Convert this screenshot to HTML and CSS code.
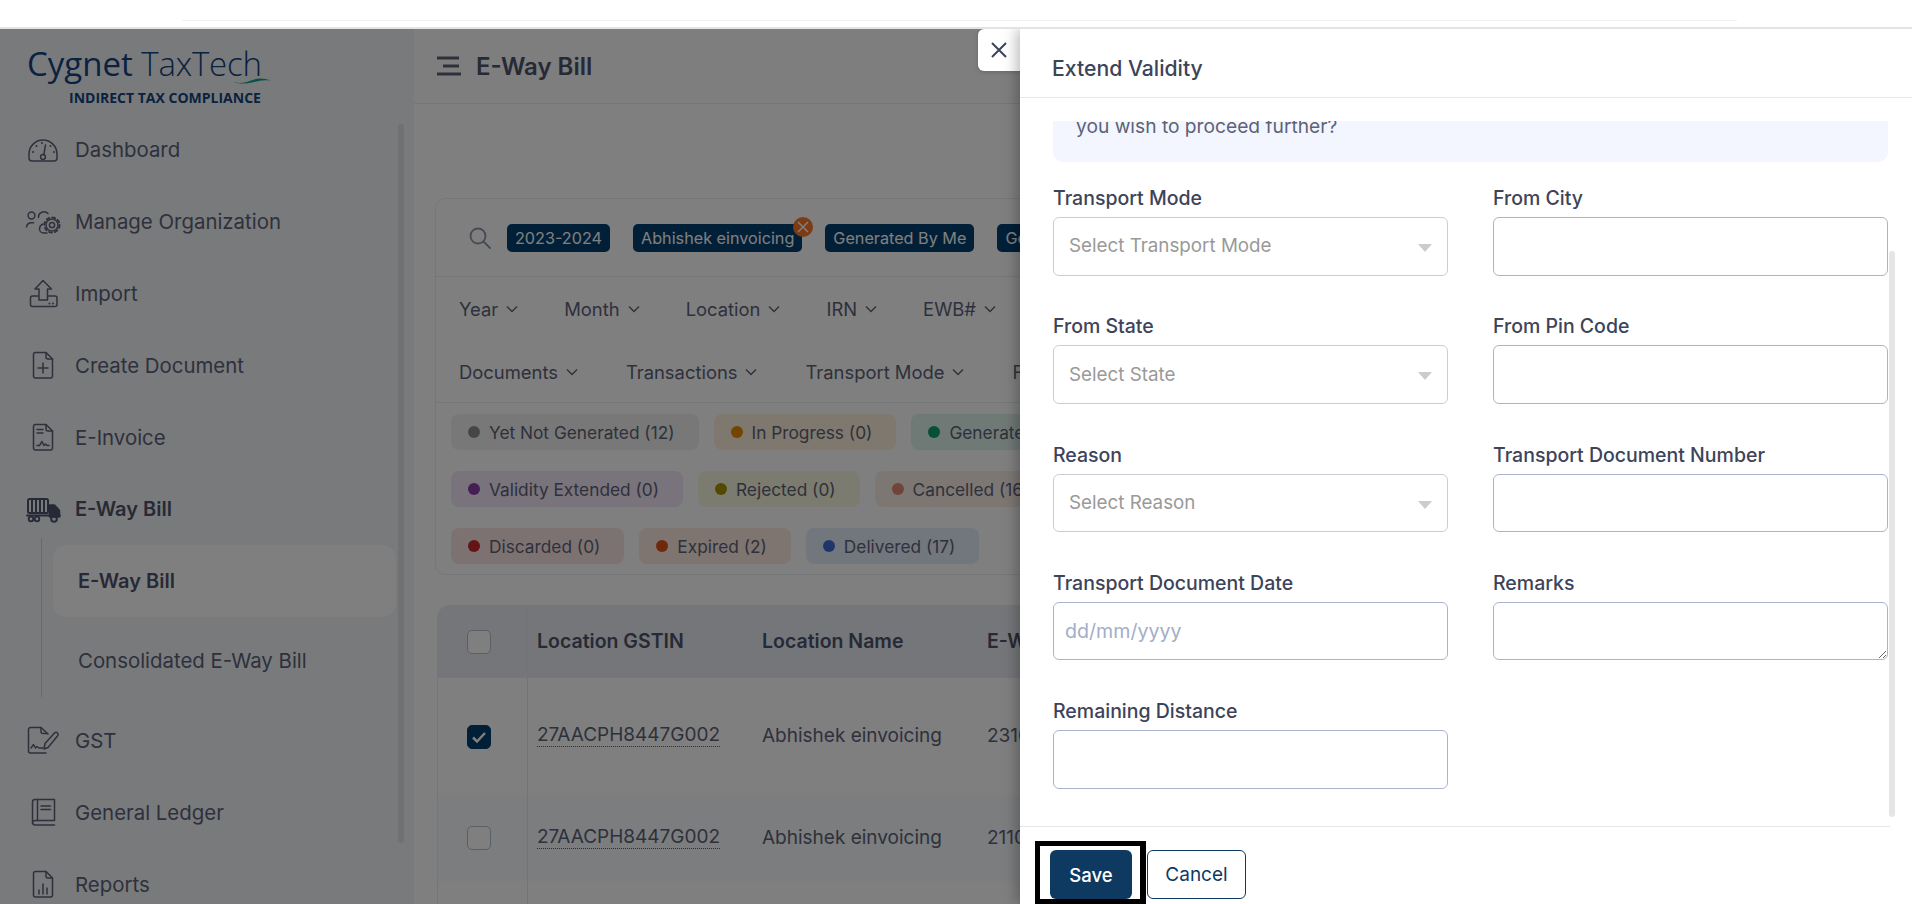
FILE: index.html
```html
<!DOCTYPE html>
<html lang="en">
<head>
<meta charset="utf-8">
<title>E-Way Bill</title>
<link rel="stylesheet" href="styles.css">
</head>
<body>
<div class="topbar"><div class="topline"></div></div>
<div class="app">
  <aside class="sidebar">
    <div class="logo">
      <div class="logo-name"><span class="logo-a">Cygnet</span> <span class="logo-b">TaxTech</span></div>
      <svg class="logo-wave" width="40" height="7" viewBox="0 0 40 7"><path d="M0 4.5C8 7 14 6 20 3.5S32 .5 40 3.6C32 2.4 27 4 21 5.5S7 7 0 4.5Z" fill="#12a388"/></svg>
      <div class="logo-sub">INDIRECT TAX COMPLIANCE</div>
    </div>
    <nav class="nav">
      <a class="nav-item"><svg class="ico" viewBox="0 0 36 36"><path d="M7 29H29a3 3 0 0 0 3-3v-4a14 14 0 0 0-28 0v4a3 3 0 0 0 3 3Z"/><circle cx="18" cy="25" r="2.4"/><path d="M18.8 22.6 20.5 13"/><path class="dots" d="M8 20h.01M11.5 14h.01M17 11h.01M25.5 14h.01M29 20h.01"/></svg><span>Dashboard</span></a>
      <a class="nav-item"><svg class="ico" viewBox="0 0 36 36"><circle cx="6.5" cy="11.5" r="3.4"/><path d="M1.5 23a5 5 0 0 1 5-4.300h2"/><path d="M13.500 13.500a5.500 5.500 0 0 1 9.500-4"/><path d="M22 29h-3.500a4 4 0 0 1-4-4 5.500 5.500 0 0 1 3.500-5"/><circle cx="27" cy="21" r="6"/><circle cx="27" cy="21" r="7.600" stroke-width="1.800" stroke-dasharray="3 2.970"/><circle cx="27" cy="21" r="2.600"/></svg><span>Manage Organization</span></a>
      <a class="nav-item"><svg class="ico" viewBox="0 0 36 36"><path d="M18 4.500 26.500 13H22.500V24H14V13H10Z"/><path d="M13 20H7.500a2 2 0 0 0-2 2v6.500a2 2 0 0 0 2 2H30a2 2 0 0 0 2-2V22a2 2 0 0 0-2-2H23"/><path class="dots" d="M24.500 27.500h.01M28 27.500h.01"/></svg><span>Import</span></a>
      <a class="nav-item"><svg class="ico" viewBox="0 0 36 36"><path d="M10.500 4.500H21L27.500 11V28a2 2 0 0 1-2 2H10.500a2 2 0 0 1-2-2V6.500a2 2 0 0 1 2-2Z"/><path d="M21 4.500V9a2 2 0 0 0 2 2h4.500"/><path d="M18 15V25M13 20H23"/></svg><span>Create Document</span></a>
      <a class="nav-item"><svg class="ico" viewBox="0 0 36 36"><path d="M10.500 4.500H21L27.500 11V28a2 2 0 0 1-2 2H10.500a2 2 0 0 1-2-2V6.500a2 2 0 0 1 2-2Z"/><path d="M21 4.500V9a2 2 0 0 0 2 2h4.500"/><path d="M12 9.500H18M12 13H18"/><path d="M12 25.500h2.500l2.500-4 2 4 1.500-1.500 1.500 1.500H24"/></svg><span>E-Invoice</span></a>
      <a class="nav-item is-open"><svg class="ico ico-solid" viewBox="0 0 36 36"><rect x="3" y="7" width="20" height="14" rx="1.500" stroke-width="2"/><path d="M7 8V20M11 8V20M15 8V20M19 8V20" stroke-width="2"/><path d="M2 23.500H35" stroke-width="2"/><path class="fill" d="M24.500 13H29.500L34.500 18.500V25H24.500Z"/><circle cx="6" cy="27" r="2.300" stroke-width="1.800"/><circle cx="12" cy="27" r="2.300" stroke-width="1.800"/><circle cx="29" cy="27" r="2.800" stroke-width="2"/></svg><span>E-Way Bill</span></a>
      <div class="subnav">
        <a class="sub-item is-current">E-Way Bill</a>
        <a class="sub-item">Consolidated E-Way Bill</a>
      </div>
      <a class="nav-item"><svg class="ico" viewBox="0 0 36 36"><path d="M21 30H5.500a2 2 0 0 1-2-2V6.500a2 2 0 0 1 2-2H16l7 6.500"/><path d="M16 4.500V8.500a2 2 0 0 0 2 2h4"/><path d="M6 25l2.500-3.500 2 3.500 1.500-1.500 2 1.500h4"/><path d="M19 26l1-5.500L29.500 10a2.100 2.100 0 0 1 3 3L23 24.500Z"/></svg><span>GST</span></a>
      <a class="nav-item"><svg class="ico" viewBox="0 0 36 36"><path d="M10 4.500H29.500V25.500H10a2.500 2.500 0 0 0-2.500 2.500V7A2.500 2.500 0 0 1 10 4.500Z"/><path d="M12.500 4.500V25.500M7.500 28A2.500 2.500 0 0 0 10 30H29.500"/><path d="M16 11H25.500M16 14.500H25.500"/></svg><span>General Ledger</span></a>
      <a class="nav-item"><svg class="ico" viewBox="0 0 36 36"><path d="M10.500 4.500H21L27.500 11V28a2 2 0 0 1-2 2H10.500a2 2 0 0 1-2-2V6.500a2 2 0 0 1 2-2Z"/><path d="M21 4.500V9a2 2 0 0 0 2 2h4.500"/><path d="M14 27V23M18 27V17M22 27V21"/></svg><span>Reports</span></a>
    </nav>
    <div class="side-scroll"></div>
  </aside>

  <main class="main">
    <header class="main-head">
      <svg class="burger" width="24" height="20" viewBox="0 0 24 20"><path d="M0 2H22M6 10H22M0 18H24" fill="none" stroke="#5d6278" stroke-width="3"/></svg>
      <h1 class="main-title">E-Way Bill</h1>
    </header>
    <section class="card">
      <div class="search-row">
        <svg class="search-ico" width="22" height="22" viewBox="0 0 22 22"><circle cx="9" cy="9" r="7.500"/><path d="M14.500 14.500 21 21"/></svg>
        <span class="chip">2023-2024</span>
        <span class="chip chip-x">Abhishek einvoicing<i class="chip-close"><svg width="14" height="14" viewBox="0 0 14 14"><path d="M2 2 12 12M12 2 2 12"/></svg></i></span>
        <span class="chip">Generated By Me</span>
        <span class="chip">Generated</span>
      </div>
      <div class="filters">
        <div class="filter-row">
          <span class="filter">Year<svg viewBox="0 0 12 8"><path d="M1 1.500 6 6.500 11 1.500"/></svg></span>
          <span class="filter">Month<svg viewBox="0 0 12 8"><path d="M1 1.500 6 6.500 11 1.500"/></svg></span>
          <span class="filter">Location<svg viewBox="0 0 12 8"><path d="M1 1.500 6 6.500 11 1.500"/></svg></span>
          <span class="filter">IRN<svg viewBox="0 0 12 8"><path d="M1 1.500 6 6.500 11 1.500"/></svg></span>
          <span class="filter">EWB#<svg viewBox="0 0 12 8"><path d="M1 1.500 6 6.500 11 1.500"/></svg></span>
        </div>
        <div class="filter-row">
          <span class="filter">Documents<svg viewBox="0 0 12 8"><path d="M1 1.500 6 6.500 11 1.500"/></svg></span>
          <span class="filter">Transactions<svg viewBox="0 0 12 8"><path d="M1 1.500 6 6.500 11 1.500"/></svg></span>
          <span class="filter">Transport Mode<svg viewBox="0 0 12 8"><path d="M1 1.500 6 6.500 11 1.500"/></svg></span>
          <span class="filter">From</span>
        </div>
      </div>
      <div class="statuses">
        <div class="status-row">
          <span class="pill s-grey"><b></b>Yet Not Generated (12)</span>
          <span class="pill s-amber"><b></b>In Progress (0)</span>
          <span class="pill s-green"><b></b>Generated (3)</span>
        </div>
        <div class="status-row">
          <span class="pill s-purple"><b></b>Validity Extended (0)</span>
          <span class="pill s-olive"><b></b>Rejected (0)</span>
          <span class="pill s-salmon"><b></b>Cancelled (16)</span>
        </div>
        <div class="status-row">
          <span class="pill s-red"><b></b>Discarded (0)</span>
          <span class="pill s-orange"><b></b>Expired (2)</span>
          <span class="pill s-blue"><b></b>Delivered (17)</span>
        </div>
      </div>
    </section>
    <section class="table">
      <div class="tr th">
        <div class="td td-check"><span class="box"></span></div>
        <div class="td">Location GSTIN</div>
        <div class="td">Location Name</div>
        <div class="td">E-Way Bill No.</div>
      </div>
      <div class="tr row-tall">
        <div class="td td-check"><span class="box box-on"><svg width="16" height="14" viewBox="0 0 16 14"><path d="M2 7.500 6 11.500 14 3"/></svg></span></div>
        <div class="td"><span class="link">27AACPH8447G002</span></div>
        <div class="td">Abhishek einvoicing</div>
        <div class="td">231012345678</div>
      </div>
      <div class="tr row-alt">
        <div class="td td-check"><span class="box"></span></div>
        <div class="td"><span class="link">27AACPH8447G002</span></div>
        <div class="td">Abhishek einvoicing</div>
        <div class="td">211012345678</div>
      </div>
      <div class="tr row-tall"><div class="td td-check"></div></div>
    </section>
  </main>

  <div class="overlay"></div>

  <button class="panel-close" type="button" aria-label="Close"><svg width="18" height="18" viewBox="0 0 18 18"><path d="M2 2 16 16M16 2 2 16"/></svg></button>

  <aside class="panel">
    <div class="panel-head">Extend Validity</div>
    <div class="panel-body">
      <div class="info">you wish to proceed further?</div>
      <form class="form-grid">
        <div class="field"><label>Transport Mode</label><div class="select">Select Transport Mode<i></i></div></div>
        <div class="field"><label>From City</label><input class="input" type="text"></div>
        <div class="field"><label>From State</label><div class="select">Select State<i></i></div></div>
        <div class="field"><label>From Pin Code</label><input class="input" type="text"></div>
        <div class="field"><label>Reason</label><div class="select">Select Reason<i></i></div></div>
        <div class="field"><label>Transport Document Number</label><input class="input" type="text"></div>
        <div class="field"><label>Transport Document Date</label><input class="input input-date" type="text" placeholder="dd/mm/yyyy"></div>
        <div class="field"><label>Remarks</label><textarea class="input"></textarea></div>
        <div class="field"><label>Remaining Distance</label><input class="input" type="text"></div>
      </form>
    </div>
    <div class="panel-foot">
      <span class="save-wrap"><button class="btn btn-save" type="button">Save</button><span class="highlight"></span></span>
      <button class="btn btn-cancel" type="button">Cancel</button>
    </div>
    <div class="panel-scroll"></div>
  </aside>
</div>
</body>
</html>
```

FILE: styles.css
```css
* { box-sizing: border-box; }
html, body { margin: 0; height: 904px; overflow: hidden; background: #fff; }
body { font-family: Inter, "Noto Sans", sans-serif; font-size: 19px; color: #5d6278; }

.topbar { height: 29px; padding-top: 20px; border-bottom: 2px solid #e3e3e3; }
.topline { height: 1px; width: 1555px; margin-left: 182px; background: #f1f1f1; }

.app { position: relative; display: flex; height: 875px; overflow: hidden; }

.sidebar { position: relative; flex: 0 0 414px; background: #f2f5f8; }
.logo { position: relative; height: 85px; padding: 15px 0 0 27px; color: #14447f; font-family: "Open Sans", sans-serif; }
.logo-name { font-size: 33px; line-height: 40px; white-space: nowrap; }
.logo-a { font-weight: 400; }
.logo-b { font-weight: 300; letter-spacing: -.2px; }
.logo-wave { position: absolute; left: 231px; top: 48px; }
.logo-sub { margin: 6px 0 0 42px; font-size: 14px; font-weight: 700; line-height: 16px; white-space: nowrap; }

.nav-item { display: flex; align-items: center; gap: 14px; height: 72px; padding-left: 25px; font-size: 20.400px; }
.nav-item span { margin-bottom: 2px; }
.nav-item.is-open { font-weight: 600; font-size: 20px; color: #4f546c; }
.ico { flex: 0 0 36px; width: 36px; height: 36px; fill: none; stroke: currentColor; stroke-width: 1.500; stroke-linecap: round; stroke-linejoin: round; }
.ico .dots { stroke-width: 2; }
.ico .fill { fill: currentColor; }

.subnav { width: 355px; margin: -8px 0 8px 41px; padding-top: 7px; height: 159px; border-left: 1px solid #cfd3da; }
.sub-item { display: flex; align-items: center; height: 72px; margin: 0 0 8px 11px; padding: 0 0 1px 25px; border-radius: 14px; font-size: 20.400px; white-space: nowrap; }
.sub-item.is-current { background: #fff; font-weight: 600; font-size: 20px; color: #4f546c; }

.side-scroll { position: absolute; left: 398px; top: 95px; width: 6px; height: 719px; border-radius: 3px; background: #dfe2e6; }

.main { flex: 1; min-width: 0; overflow: hidden; background: #fff; }
.main-head { display: flex; align-items: center; gap: 15px; height: 75px; padding-left: 23px; background: #fcfdff; border-bottom: 1px solid #ecedf0; }
.burger { flex: none; }
.main-title { margin: 0; font-size: 24px; font-weight: 600; color: #4f546c; white-space: nowrap; }

.card { width: 1460px; margin: 94px 0 0 21px; height: 377px; border: 1px solid #ebedf0; border-radius: 10px; }
.search-row { display: flex; align-items: center; height: 78px; padding-left: 33px; border-bottom: 1px solid #ebedf0; gap: 23px; }
.search-ico { flex: none; margin-right: -7px; fill: none; stroke: #8b95a8; stroke-width: 1.800; stroke-linecap: round; }
.chip { position: relative; flex: none; display: flex; align-items: center; height: 28px; padding: 0 8px; border-radius: 5px; background: #033f6e; color: #fff; font-size: 16.200px; white-space: nowrap; }
.chip-close { position: absolute; right: -11px; top: -7px; display: flex; align-items: center; justify-content: center; width: 20px; height: 20px; border-radius: 50%; background: #f8762a; }
.chip-close svg { fill: none; stroke: #fff; stroke-width: 1.500; }

.filters { height: 126px; padding: 0 0 0 23px; border-bottom: 1px solid #ebedf0; }
.filter-row { display: flex; align-items: center; gap: 46px; height: 63px; }
.filter-row + .filter-row { gap: 48px; }
.filter { display: flex; align-items: center; gap: 8px; font-size: 18.400px; white-space: nowrap; }
.filter svg { width: 12px; height: 8px; fill: none; stroke: currentColor; stroke-width: 1.400; }

.statuses { display: flex; flex-direction: column; gap: 21px; padding: 11px 0 0 15px; }
.status-row { display: flex; gap: 15px; }
.pill { display: flex; align-items: center; gap: 9px; height: 36px; padding: 0 24px 0 17px; border-radius: 8px; font-size: 17.300px; white-space: nowrap; }
.pill b { flex: none; width: 12px; height: 12px; border-radius: 50%; background: var(--dot); }
.s-grey { --dot: #8d8d8d; background: #f1f1f1; }
.s-amber { --dot: #e68a00; background: #fdf0de; }
.s-green { --dot: #0e9f6e; background: #dff3ec; }
.s-purple { --dot: #8b3fa8; background: #f2e6f7; }
.s-olive { --dot: #a39500; background: #f7f6df; }
.s-salmon { --dot: #e08a6e; background: #fbeee9; }
.s-red { --dot: #c62828; background: #fbe5e5; }
.s-orange { --dot: #e0501a; background: #fce9e0; }
.s-blue { --dot: #3d6fd1; background: #e5edfa; }

.table { width: 1460px; margin: 30px 0 0 23px; border: 1px solid #ebedf0; border-radius: 12px 12px 0 0; overflow: hidden; color: #5d6278; }
.tr { display: grid; grid-template-columns: 90px 225px 225px 1fr; align-items: stretch; font-size: 19px; }
.td { display: flex; align-items: center; padding: 0 0 2px 9px; white-space: nowrap; }
.td-check { justify-content: center; padding: 0 7px 0 0; border-right: 1px solid #e6e9ee; }
.th { height: 72px; background: #e9edf3; font-weight: 600; font-size: 19.500px; color: #4f546c; }
.row-tall { height: 117px; }
.row-alt { height: 86px; background: #f8fafd; }
.box { display: flex; align-items: center; justify-content: center; width: 24px; height: 24px; border: 1px solid #b6bccb; border-radius: 5px; background: #fff; }
.box-on { background: #033f6e; border-color: #033f6e; }
.box-on svg { fill: none; stroke: #fff; stroke-width: 2.500; }
.link { border-bottom: 1px dotted #3d5f99; line-height: 22px; }

.overlay { position: absolute; inset: 0; background: rgba(0, 0, 0, .5); }

.panel-close { position: absolute; left: 978px; top: 0; display: flex; align-items: center; justify-content: center; width: 44px; height: 42px; padding: 0 2px 0 0; border: 0; border-radius: 6px 0 0 6px; background: #fff; box-shadow: 0 1px 4px rgba(0, 0, 0, .2); }
.panel-close svg { fill: none; stroke: #3d4359; stroke-width: 2; }

.panel { position: absolute; top: 0; right: 0; bottom: 0; width: 892px; display: flex; flex-direction: column; background: #fff; box-shadow: -4px 0 12px rgba(0, 0, 0, .25); }
.panel-head { flex: none; display: flex; align-items: center; height: 69px; padding: 9px 0 0 32px; border-bottom: 1px solid #e6e7ea; font-size: 21.200px; font-weight: 500; color: #3d4359; }
.panel-body { flex: none; height: 705px; margin-top: 23px; overflow: hidden; }
.info { width: 835px; margin: -10px 0 0 33px; padding: 2px 23px 22px; border-radius: 0 0 10px 10px; background: #f3f6fe; font-size: 19.200px; line-height: 27px; color: #5d6278; }
.form-grid { display: grid; grid-template-columns: 395px 395px; column-gap: 45px; row-gap: 38.750px; margin: 24px 0 0 33px; }
.field { display: flex; flex-direction: column; gap: 7px; }
.field label { height: 24px; line-height: 25px; font-size: 19.500px; font-weight: 500; color: #3d4359; white-space: nowrap; }
.input, .select { display: block; width: 395px; height: 58.500px; margin: 0; border-radius: 6px; background: #fff; font: inherit; }
.input { padding: 0 11px; border: 1px solid #aab4cf; outline: 0; }
.input-date { font-size: 19.600px; }
.input-date::placeholder { color: #a3aec8; opacity: 1; }
textarea.input { resize: both; }
.select { position: relative; display: flex; align-items: center; padding: 0 0 1px 15px; border: 1px solid #c9cdd6; color: #999; font-size: 18.800px; }
.select i { position: absolute; right: 15px; top: 26px; border-style: solid; border-width: 8px 7px 0; border-color: #ccc transparent transparent; }

.panel-foot { position: relative; flex: none; display: flex; gap: 15px; width: 870px; height: 78px; padding: 23px 0 0 30px; border-top: 1px solid #e6e7ea; }
.save-wrap { position: relative; display: block; }
.btn { height: 49px; margin: 0; border-radius: 6px; font: inherit; font-size: 19px; }
.btn-save { width: 82px; border: 0; background: #0e3a62; color: #fff; font-weight: 500; font-size: 18.500px; }
.btn-cancel { width: 99px; border: 1px solid #0e3a62; background: #fff; color: #0e3a62; }
.highlight { position: absolute; left: -15px; top: -9px; width: 111px; height: 63px; border: 5px solid #000; border-right-width: 6px; }
.panel-scroll { position: absolute; left: 869px; top: 222px; width: 6px; height: 566px; border-radius: 3px; background: #e5e5e5; }
```
